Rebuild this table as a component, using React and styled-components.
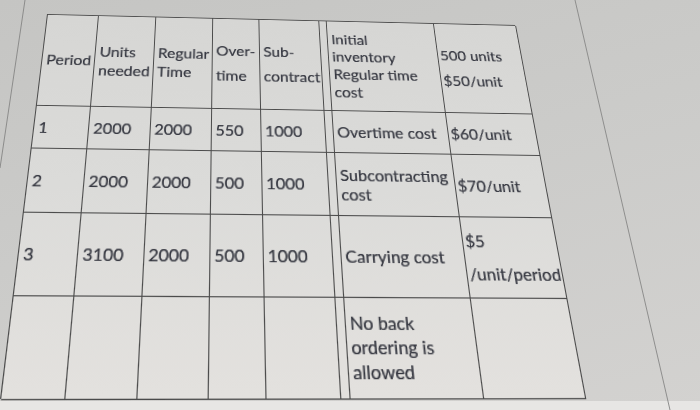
import React from "react";
import styled, { createGlobalStyle } from "styled-components";

const GlobalStyle = createGlobalStyle`
  html, body { margin: 0; padding: 0; }
  body { background: #cbcbc9; overflow: hidden; font-family: Lato, "Liberation Sans", sans-serif; }
  * { box-sizing: border-box; }
`;

const Scene = styled.div`
  position: relative;
  width: 700px;
  height: 410px;
  overflow: hidden;
  background:
    linear-gradient(to bottom, transparent 401px, #e7e6e4 401px),
    linear-gradient(165deg, #c5c5c3 0%, #cbcbc9 45%, #d3d2d0 100%);
`;

const PaperEdges = styled.svg`
  position: absolute;
  inset: 0;
  width: 700px;
  height: 410px;
  pointer-events: none;
`;

/* homography that maps the flat 500x365 table onto the photographed sheet */
const Sheet = styled.div`
  position: relative;
  display: grid;
  width: 500px;
  height: 365px;
  grid-template-columns: 53px 59.5px 60px 49px 64.5px 7.5px 116.5px 90px;
  grid-template-rows: 102px 44px 62px 74px 83px;
  border-top: 1.2px solid #4a4a4a;
  border-left: 1.2px solid #4a4a4a;
  background: linear-gradient(to bottom, #d6d6d4 0%, #dbdbd9 50%, #e3e1de 100%);
  transform-origin: 0 0;
  transform: matrix3d(0.968574, 0.023581, 0, 0.00006325, -0.128767, 0.832027, 0, -0.00055831, 0, 0, 1, 0, 47, 14, 0, 1);
`;

const Cell = styled.div`
  display: flex;
  flex-direction: column;
  justify-content: center;
  align-items: flex-start;
  padding: 0 0 0 ${(p) => (p.$value ? 2 : 4)}px;
  border-right: 1.2px solid #4a4a4a;
  border-bottom: 1.2px solid #4a4a4a;
  font-family: Lato, "Liberation Sans", sans-serif;
  font-size: 16px;
  line-height: ${(p) => p.$lh || 20}px;
  color: #363841;
  text-shadow: 0 0 0.5px rgba(54, 56, 65, 0.7);
  white-space: nowrap;
  overflow: visible;
`;

const Line = styled.span`
  display: block;
`;

const rows = [
  [
    { t: ["Period"] },
    { t: ["Units", "needed"], lh: 21 },
    { t: ["Regular", "Time"], lh: 21 },
    { t: ["Over-", "time"], lh: 28 },
    { t: ["Sub-", "contract"], lh: 28 },
    { t: [] },
    { t: ["Initial", "inventory", "Regular time", "cost"], lh: 20 },
    { t: ["500 units", "$50/unit"], lh: 29 },
  ],
  [
    { t: ["1"] },
    { t: ["2000"] },
    { t: ["2000"] },
    { t: ["550"] },
    { t: ["1000"] },
    { t: [] },
    { t: ["Overtime cost"] },
    { t: ["$60/unit"] },
  ],
  [
    { t: ["2"] },
    { t: ["2000"] },
    { t: ["2000"] },
    { t: ["500"] },
    { t: ["1000"] },
    { t: [] },
    { t: ["Subcontracting", "cost"], lh: 19 },
    { t: ["$70/unit"] },
  ],
  [
    { t: ["3"] },
    { t: ["3100"] },
    { t: ["2000"] },
    { t: ["500"] },
    { t: ["1000"] },
    { t: [] },
    { t: ["Carrying cost"] },
    { t: ["$5", "/unit/period"], lh: 30 },
  ],
  [
    { t: [] },
    { t: [] },
    { t: [] },
    { t: [] },
    { t: [] },
    { t: [] },
    { t: ["No back", "ordering is", "allowed"], lh: 20 },
    { t: [] },
  ],
];

export default function App() {
  return (
    <>
      <GlobalStyle />
      <Scene>
        <PaperEdges viewBox="0 0 700 410">
          <line x1="25" y1="0" x2="0" y2="168" stroke="#8c8c8b" strokeWidth="1" />
          <line x1="575" y1="0" x2="670" y2="410" stroke="#8e8e8d" strokeWidth="1" />
        </PaperEdges>
        <Sheet>
          {rows.map((row, r) =>
            row.map((c, i) => (
              <Cell key={`${r}-${i}`} $lh={c.lh} $value={i === 7}>
                {c.t.map((s, k) => (
                  <Line key={k}>{s}</Line>
                ))}
              </Cell>
            ))
          )}
        </Sheet>
      </Scene>
    </>
  );
}
